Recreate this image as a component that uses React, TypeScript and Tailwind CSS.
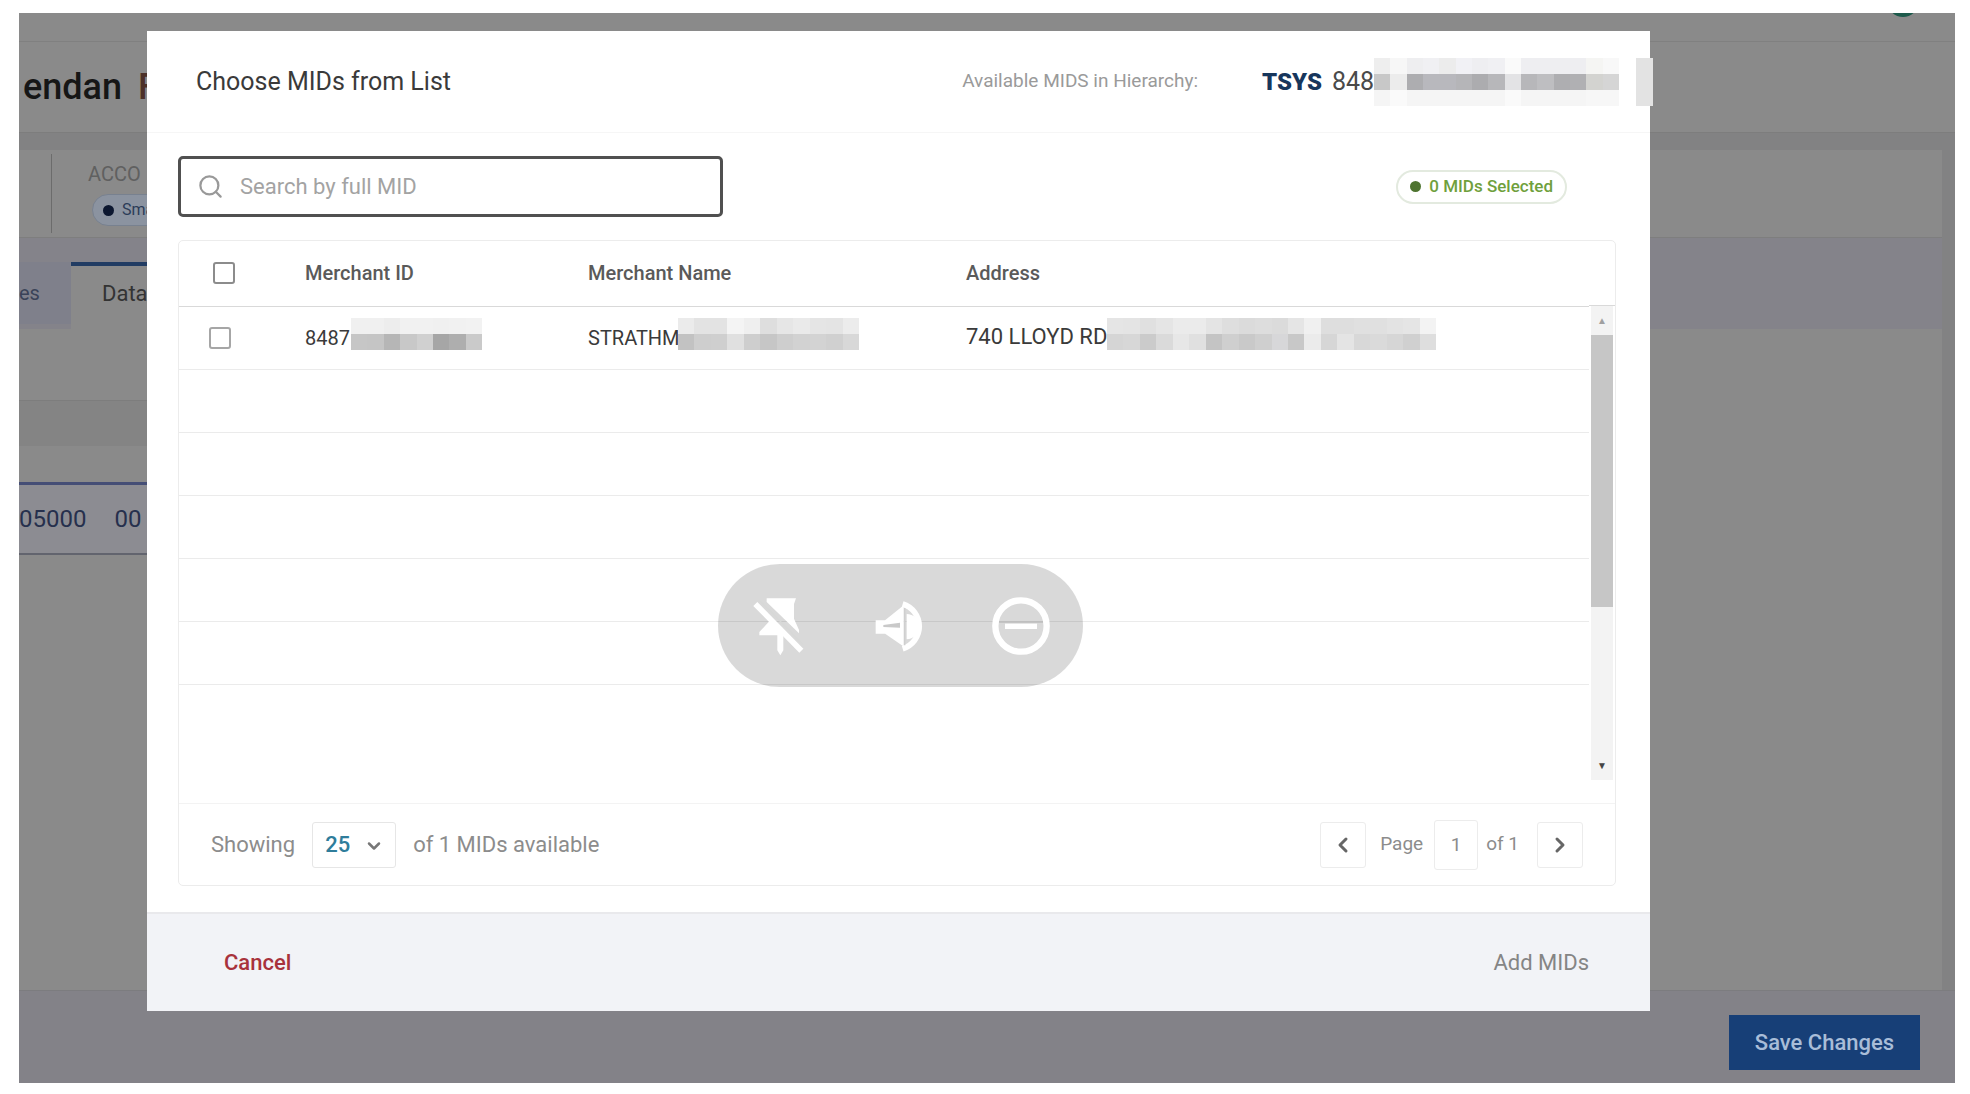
import { useState } from "react";
import { ChevronDown, ChevronLeft, ChevronRight, Search } from "lucide-react";

const ID_MASK = [
  ["#f0f0f0", "#f0f0f0", "#ededed", "#f1f1f1", "#f1f1f1", "#f0f0f0", "#f1f1f1", "#f2f2f2"],
  ["#c6c6c6", "#c5c5c5", "#b6b6b6", "#c8c8c8", "#d0d0d0", "#a6a6a6", "#aeaeae", "#cacaca"],
];

const NAME_MASK = [
  ["#ebebeb", "#e3e3e3", "#e3e3e3", "#f4f4f4", "#efefef", "#dedede", "#e6e6e6", "#eaeaea", "#e5e5e5", "#e4e4e4", "#ececec"],
  ["#c2c2c2", "#cecece", "#cfcfcf", "#e0e0e0", "#cecece", "#c6c6c6", "#cecece", "#d2d2d2", "#d3d3d3", "#d0d0d0", "#d8d8d8"],
];

const ADDRESS_MASK = [
  ["#e5e5e5", "#e4e4e4", "#e0e0e0", "#e5e5e5", "#ebebeb", "#ebebeb", "#e4e4e4", "#dedede", "#dbdbdb", "#dddddd", "#dbdbdb", "#e5e5e5", "#f0f0f0", "#dedede", "#dedede", "#e0e0e0", "#e0e0e0", "#e3e3e3", "#e5e5e5", "#f3f3f3"],
  ["#d5d5d5", "#d7d7d7", "#cbcbcb", "#dadada", "#e7e7e7", "#e0e0e0", "#c4c4c4", "#cfcfcf", "#c9c9c9", "#cfcfcf", "#d7d7d9", "#c8c8c8", "#ebebeb", "#d6d6d6", "#e4e4e4", "#d8d8d8", "#dadada", "#d6d6d6", "#d0d0d0", "#dedede"],
];

const HEADER_MASK = [
  ["#eeeeee", "#f7f7f7", "#eeeef0", "#f0f0f3", "#ececec", "#f1f1f5", "#eeeef1", "#f0f0f3", "#fafafa", "#eeeef1", "#eeeef1", "#eeeef1", "#eeeef1", "#f5f5f3", "#f8f8f8"],
  ["#c8c8c8", "#ececec", "#adadb0", "#b8b8bd", "#b8b8bd", "#b5b5b8", "#acacaf", "#b7b7ba", "#e3e3e5", "#b7b7ba", "#bebec1", "#aeaeb1", "#b0b0b3", "#d3d3d0", "#d5d5d5"],
  ["#f5f5f5", "#fafafa", "#f5f5f5", "#f5f5f5", "#f5f5f5", "#f5f5f5", "#f5f5f5", "#f5f5f5", "#fafafa", "#f5f5f5", "#f5f5f5", "#f5f5f5", "#f5f5f5", "#f7f7f7", "#f7f7f7"],
];

const EMPTY_ROWS = [1, 2, 3, 4, 5];

function Mask({ rows, className }: { rows: string[][]; className: string }) {
  return (
    <span className={`flex shrink-0 flex-col ${className}`} aria-hidden="true">
      {rows.map((row, i) => (
        <span key={i} className="flex h-4">
          {row.map((color, j) => (
            <span key={j} className="flex-1" style={{ backgroundColor: color }} />
          ))}
        </span>
      ))}
    </span>
  );
}

function Backdrop() {
  return (
    <div className="flex flex-1 flex-col overflow-hidden bg-[#828283] pr-[13px]">
      <div className="-mr-[13px] flex h-[29px] justify-end border-b border-[#808080] bg-[#8a8a8a] pr-[36px]">
        <span className="-mt-[28px] size-8 rounded-full bg-[#1d5a4b]" />
      </div>
      <div className="-mr-[13px] flex h-[91px] items-center gap-4 border-b border-[#7d7d7d] bg-[#8a8a8a] pl-1 text-[36px] font-medium text-[#161616]">
        <span>endan</span>
        <span className="text-[#4c3028]">F</span>
      </div>

      <div className="mt-[17px] flex h-[87px] bg-[#8a8a8a] pl-8">
        <div className="my-1 w-px bg-[#6c6c6c]" />
        <div className="flex flex-col items-start gap-2 pt-3 pl-9">
          <span className="text-xl leading-6 text-[#606060]">ACCO</span>
          <span className="ml-1 flex h-8 items-center gap-2 rounded-full border border-[#78818f] bg-[#8b93a0] px-[10px] text-base text-[#2b3c58]">
            <span className="size-[11px] rounded-full bg-[#0c1730]" />
            Small
          </span>
        </div>
      </div>

      <nav className="flex h-[92px] items-start border-t border-[#7e7e7e] bg-[#84838a] pt-6">
        <a href="#fees" className="flex h-[62px] w-[52px] items-center bg-[#7f808b] text-xl text-[#3a4358]">
          es
        </a>
        <a href="#data" className="flex h-[68px] w-[160px] items-center border-t-4 border-[#213c63] bg-[#8a8a8a] pb-[10px] pl-[31px] text-[22px] text-[#333]">
          Data
        </a>
      </nav>

      <div className="flex flex-1 flex-col bg-[#8a8a8a]">
        <div className="w-[240px] pt-[71px]">
          <div className="h-[46px] border-t border-[#7d7d7d] bg-[#848484]" />
          <div className="mt-9 flex h-[73px] items-center gap-7 border-t-3 border-b-2 border-t-[#454e76] border-b-[#62646e] bg-[#8c8c92] text-[24px] text-[#26304d]">
            <span>05000</span>
            <span>00</span>
          </div>
        </div>
      </div>

      <footer className="-mr-[13px] flex h-[93px] items-center justify-end border-t border-[#7c7c7f] bg-[#838288] pr-[35px]">
        <button className="mt-[11px] h-[55px] w-[191px] bg-[#173f77] text-[22px] font-medium text-[#a9bdd8]">
          Save Changes
        </button>
      </footer>
    </div>
  );
}

function ModalHeader() {
  return (
    <header className="flex h-[102px] items-center border-b border-[#f6f6f6] pl-[49px]">
      <h1 id="modal-title" className="text-[25px] text-[#3a3a3a]">
        Choose MIDs from List
      </h1>
      <span className="ml-auto text-[19px] text-[#9a9a9a]">Available MIDS in Hierarchy:</span>
      <span className="ml-16 text-[24px] font-black text-[#17365c]">TSYS</span>
      <span className="ml-[10px] w-[42px] text-[25px] text-[#4a4a4a]">848</span>
      <Mask rows={HEADER_MASK} className="w-[245px]" />
      <span className="-mr-[3px] ml-[17px] h-12 w-[17px] bg-[#e3e3e3]" />
    </header>
  );
}

function MidTable() {
  return (
    <div className="flex h-[562px]">
      <div className="flex-1">
        <table className="w-full table-fixed text-left text-xl text-[#3a3a3a]">
          <thead>
            <tr className="h-[65px] border-b border-[#d9d9d9]">
              <th className="w-[126px] pl-[34px]">
                <input type="checkbox" aria-label="Select all" className="block size-[22px] appearance-none rounded-[3px] border-2 border-[#8c8c8c] bg-white" />
              </th>
              <th className="w-[283px] font-medium text-[#5a5a5a]">Merchant ID</th>
              <th className="w-[378px] font-medium text-[#5a5a5a]">Merchant Name</th>
              <th className="font-medium text-[#5a5a5a]">Address</th>
            </tr>
          </thead>
          <tbody>
            <tr className="h-[63px] border-b border-[#ebebeb]">
              <td className="pl-[30px]">
                <input type="checkbox" aria-label="Select 8487" className="block size-[22px] appearance-none rounded-[3px] border-2 border-[#a6a6a6] bg-white" />
              </td>
              <td>
                <div className="flex items-center">
                  <span className="w-[46px]">8487</span>
                  <Mask rows={ID_MASK} className="mb-2 w-[131px]" />
                </div>
              </td>
              <td>
                <div className="flex items-center">
                  <span className="w-[90px]">STRATHM</span>
                  <Mask rows={NAME_MASK} className="mb-2 w-[181px]" />
                </div>
              </td>
              <td>
                <div className="flex items-center">
                  <span className="w-[141px] text-[22px] whitespace-nowrap">740 LLOYD RD</span>
                  <Mask rows={ADDRESS_MASK} className="mb-2 w-[329px]" />
                </div>
              </td>
            </tr>
            {EMPTY_ROWS.map((row) => (
              <tr key={row} className="h-[63px] border-b border-[#ebebeb]">
                <td colSpan={4} />
              </tr>
            ))}
          </tbody>
        </table>
      </div>

      <div className="flex w-[26px] flex-col">
        <div className="h-[65px] border-b border-[#d9d9d9]" />
        <div className="flex h-[474px] w-[22px] flex-col items-center self-center bg-[#f3f3f3]">
          <span className="flex h-[29px] items-center text-[10px] text-[#a0a0a0]">▲</span>
          <span className="h-[272px] w-full bg-[#c6c6c6]" />
          <span className="mt-auto flex h-[29px] items-center text-[10px] text-[#444]">▼</span>
        </div>
      </div>
    </div>
  );
}

function TableFooter() {
  const [pageSize, setPageSize] = useState("25");

  return (
    <div className="flex h-[82px] items-center border-t border-[#f3f3f3] pr-8 pl-8 text-[22px] text-[#8c8c8c]">
      <label htmlFor="page-size">Showing</label>
      <div className="relative mx-[17px]">
        <select
          id="page-size"
          value={pageSize}
          onChange={(e) => setPageSize(e.target.value)}
          className="h-[46px] w-[84px] appearance-none rounded-[3px] border border-[#e6e6e6] bg-white pl-3 font-medium text-[#2f7d9b]"
        >
          <option>25</option>
          <option>50</option>
        </select>
        <ChevronDown className="pointer-events-none absolute top-[14px] right-3 size-5 text-[#777]" strokeWidth={3} />
      </div>
      <span>of 1 MIDs available</span>

      <div className="ml-auto flex items-center text-[19px]">
        <button aria-label="Previous page" className="flex h-[46px] w-[46px] items-center justify-center rounded-[3px] border border-[#ececec] text-[#666]">
          <ChevronLeft className="size-6" strokeWidth={3} />
        </button>
        <label htmlFor="page" className="ml-[14px]">Page</label>
        <input id="page" defaultValue="1" className="mr-2 ml-[11px] h-[50px] w-[44px] rounded-[3px] border border-[#ececec] text-center" />
        <span>of 1</span>
        <button aria-label="Next page" className="ml-[18px] flex h-[46px] w-[46px] items-center justify-center rounded-[3px] border border-[#ececec] text-[#666]">
          <ChevronRight className="size-6" strokeWidth={3} />
        </button>
      </div>
    </div>
  );
}

function CallControls() {
  return (
    <div className="absolute top-[533px] left-1/2 ml-[-181px] flex h-[123px] w-[365px] items-center rounded-full bg-black/15 pl-[32px] text-white">
      <button aria-label="Unpin" className="h-[60px] w-[56px]">
        <svg viewBox="0 0 168 180" className="h-full w-full" fill="currentColor">
          <path d="M50 7H138L132 24V68L147 102V112L50 18Z" />
          <path d="M58 76L28 108V118H82V163L91 178L100 163V112Z" />
          <path d="M16 24L154 164" stroke="currentColor" strokeWidth="17" />
          <path d="M30 14L160 146" stroke="#d7d8d7" strokeWidth="4" />
        </svg>
      </button>
      <button aria-label="Sound" className="ml-[66px] h-[60px] w-[56px]">
        <svg viewBox="0 0 168 180" className="h-full w-full overflow-visible" fill="none" stroke="currentColor">
          <path d="M14 76H40L92 34V146L40 110H14Z" fill="currentColor" strokeWidth="6" />
          <path d="M34 87L84 80V95L34 93Z" fill="#c9c9c9" stroke="none" />
          <path d="M104 54A38 38 0 0 1 104 130Z" fill="currentColor" stroke="none" />
          <path d="M92 24A70 70 0 0 1 92 158" strokeWidth="17" />
          <path d="M98 36V148" stroke="#cfcfcf" strokeWidth="4" />
        </svg>
      </button>
      <button aria-label="Do not disturb" className="ml-[63px] size-[60px]">
        <svg viewBox="0 0 180 180" className="h-full w-full" fill="none" stroke="currentColor">
          <circle cx="90" cy="90" r="77" strokeWidth="19" />
          <path d="M42 91H138" strokeWidth="16" />
          <path d="M24 78H156" stroke="#bdbdbd" strokeWidth="5" />
        </svg>
      </button>
    </div>
  );
}

export default function App() {
  return (
    <div className="flex min-h-screen flex-col bg-white pt-[13px] pr-[15px] pb-[11px] pl-[19px] font-[Roboto,sans-serif]">
      <div className="relative flex flex-1 flex-col">
        <Backdrop />

        <div className="absolute inset-x-0 top-[18px] pr-[305px] pl-[128px]">
          <div role="dialog" aria-labelledby="modal-title" className="relative bg-white">
            <ModalHeader />

            <div className="pt-[23px] pr-[34px] pb-[26px] pl-[31px]">
              <div className="flex items-center justify-between pr-[49px]">
                <label className="flex h-[61px] w-[545px] items-center gap-4 rounded-[5px] border-3 border-[#505050] pl-4">
                  <Search className="size-[27px] shrink-0 text-[#999]" />
                  <input
                    aria-label="Search by full MID"
                    placeholder="Search by full MID"
                    className="flex-1 text-[22px] outline-none placeholder:text-[#a3a3a3]"
                  />
                </label>
                <span className="flex h-[34px] items-center gap-2 rounded-full border-2 border-[#e3eadf] px-3 text-[17px] font-medium text-[#6fa03c]">
                  <span className="size-[11px] rounded-full bg-[#4e7430]" />
                  0 MIDs Selected
                </span>
              </div>

              <div className="mt-[23px] rounded-[5px] border border-[#ececec]">
                <MidTable />
                <TableFooter />
              </div>
            </div>

            <footer className="flex h-[99px] items-center justify-between border-t-2 border-[#e9e9ec] bg-[#f2f3f7] pr-[61px] pl-[77px] text-[22px]">
              <button className="font-medium text-[#a8323c]">Cancel</button>
              <button className="text-[#858585]">Add MIDs</button>
            </footer>

            <CallControls />
          </div>
        </div>
      </div>
    </div>
  );
}
